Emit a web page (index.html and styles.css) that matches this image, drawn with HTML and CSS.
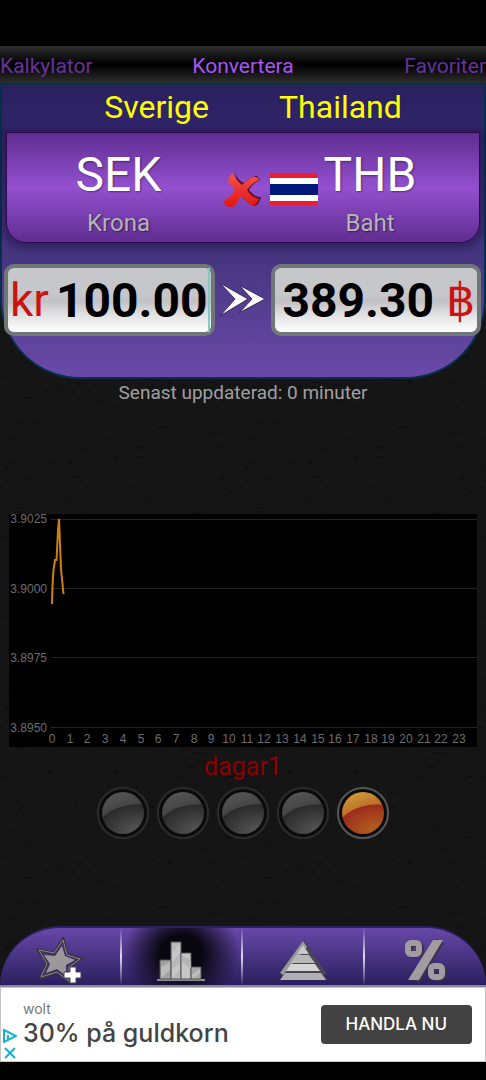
FILE: index.html
```html
<!DOCTYPE html>
<html lang="sv">
<head>
    <meta charset="UTF-8">
    <meta name="viewport" content="width=device-width, initial-scale=1.0">
    <title>Konvertera</title>
    <link rel="stylesheet" href="styles.css">
</head>
<body>
    <nav class="tabs">
        <a href="#kalkylator">Kalkylator</a>
        <a href="#konvertera" class="active">Konvertera</a>
        <a href="#favoriter">Favoriter</a>
    </nav>

    <main class="content">
        <section class="panel">
            <div class="countries">
                <span>Sverige</span>
                <span>Thailand</span>
            </div>

            <div class="currencies">
                <button class="currency" type="button">
                    <span class="code">SEK</span>
                    <span class="name">Krona</span>
                </button>
                <button class="icon-btn" type="button" aria-label="Rensa">
                    <svg width="40" height="40" viewBox="0 0 40 40">
                        <defs>
                            <linearGradient id="red" x1="0" y1="0" x2="0" y2="1">
                                <stop offset="0" stop-color="#f4544e"/>
                                <stop offset="1" stop-color="#e0140f"/>
                            </linearGradient>
                        </defs>
                        <path d="M12 2 C14 7 18 11 22 13 C26 9 31 6 35 6 L38 10 C33 12 29 16 27 20 C31 25 34 27 39 27 C38 32 35 36 32 36 C27 34 23 30 20 27 Z" fill="#5a1030"/>
                        <path d="M11 3 C8 5 6 8 6 12 C9 15 11 17 13 20 C10 25 6 29 1 31 C3 35 6 38 10 37 C14 35 17 30 19 26 C23 30 27 34 31 36 C34 34 36 32 37 29 C32 28 28 25 25 20 C28 16 32 12 37 10 C35 6 31 6 27 9 C24 11 22 13 20 15 C16 12 13 8 11 3 Z" fill="url(#red)"/>
                    </svg>
                </button>
                <button class="currency target" type="button">
                    <svg class="flag" width="48" height="32" viewBox="0 0 48 32">
                        <rect width="48" height="32" fill="#ed1c2e"/>
                        <rect y="5" width="48" height="23" fill="#fff"/>
                        <rect y="11" width="48" height="11" fill="#00187a"/>
                    </svg>
                    <span class="code">THB</span>
                    <span class="name">Baht</span>
                </button>
            </div>

            <div class="amounts">
                <label class="amount">
                    <span class="symbol">kr</span>
                    <input type="text" value="100.00" aria-label="Belopp i SEK">
                    <span class="caret"></span>
                </label>
                <svg class="arrows" width="48" height="38" viewBox="0 0 48 38">
                    <path d="M1 2 L29 18 L1 35 L16 18 Z" fill="#fff" stroke="#3a2a66"/>
                    <path d="M20 4 L46 18 L20 32 L33 18 Z" fill="#fff" stroke="#3a2a66"/>
                </svg>
                <label class="amount">
                    <input type="text" value="389.30" aria-label="Belopp i THB">
                    <span class="symbol">฿</span>
                </label>
            </div>
        </section>

        <p class="updated">Senast uppdaterad: 0 minuter</p>

        <svg class="chart" viewBox="0 0 468 233">
            <rect width="468" height="233" fill="#000"/>
            <g class="grid">
                <path d="M42 5h426M42 74h426M42 143h426M42 213h426"/>
            </g>
            <g class="y-labels">
                <text x="38" y="9">3.9025</text>
                <text x="38" y="79">3.9000</text>
                <text x="38" y="148">3.8975</text>
                <text x="38" y="218">3.8950</text>
            </g>
            <g class="x-labels" id="x-labels"></g>
            <path class="line" d="M43 90 L43.500 72 L44.500 56 L46 46 H47.500 L49 17 L50 5 L51 30 L52 55 L54.500 80"/>
        </svg>

        <p class="range">dagar1</p>

        <div class="dots">
            <input type="radio" name="range" aria-label="5 år">
            <input type="radio" name="range" aria-label="1 år">
            <input type="radio" name="range" aria-label="1 månad">
            <input type="radio" name="range" aria-label="1 vecka">
            <input type="radio" name="range" aria-label="1 dag" checked>
        </div>

        <nav class="toolbar">
            <button type="button" aria-label="Lägg till favorit">
                <svg width="48" height="48" viewBox="0 0 48 48">
                    <path d="M27 2 L31 17 L45 22 L33 30 L34 45 L21 35 L5 41 L11 27 L2 13 L18 16 Z" fill="#45316f" stroke="#3a3642" stroke-width="3"/>
                    <path d="M27 3 L31 18 L44 22 L33 30 L33 44 L21 35 L5 40 L11 27 L3 13 L18 16 Z" fill="none" stroke="#8a868c"/>
                    <path d="M26 9 L29 19 L39 23 L30 28 L30 39 L21 32 L10 36 L14 27 L8 18 L19 19 Z" fill="#9a989b"/>
                    <path d="M34 30h6v5h5v6h-5v5h-6v-5h-6v-6h6z" fill="#fff" stroke="#4a4356"/>
                </svg>
            </button>
            <button type="button" class="active" aria-label="Diagram">
                <svg width="48" height="48" viewBox="0 0 48 48">
                    <path d="M0 43h48" stroke="#8d8d8d" stroke-width="2"/>
                    <g stroke="#555">
                        <path d="M3 23h11v19H3z" fill="#a2a2a2"/>
                        <path d="M14 5h10v37H14z" fill="#b8b8b8"/>
                        <path d="M24 16h10v26H24z" fill="#c6c6c6"/>
                        <path d="M34 30h10v12H34z" fill="#a8a8a8"/>
                    </g>
                    <path d="M4 30l9-5v8l-9 8zM15 15l8-8v9l-8 9zM15 33l8-8v8l-8 8zM35 38l8-6v4l-7 6z" fill="#d4d4d4" opacity=".5"/>
                    <path d="M25 18l9 6v7l-9-6z" fill="#b4b4b4"/>
                </svg>
            </button>
            <button type="button" aria-label="Pyramid">
                <svg width="48" height="48" viewBox="0 0 48 48">
                    <path d="M25 3 L48 37 L45 38 L48 43 L2 43 L4 37 L1 36 Z" fill="#4a4456"/>
                    <path d="M24 4 L28 10 L4 38 L1 36 Z" fill="#999"/>
                    <path d="M24 8 L30 17 H18 Z" fill="#c8c8c8"/>
                    <path d="M17 18 H30 L36 26 H12 Z" fill="#b8b8b8"/>
                    <path d="M12 27 H36 L41 34 H7 Z" fill="#d4d4d4"/>
                    <path d="M6 36 H42 L47 43 H1 Z" fill="#b0b0b0"/>
                </svg>
            </button>
            <button type="button" aria-label="Procent">
                <svg width="48" height="48" viewBox="0 0 48 48">
                    <g transform="translate(2 1)" fill="none" stroke="#3c334b">
                        <rect x="7" y="6" width="11" height="11" rx="4" stroke-width="6"/>
                        <rect x="30" y="29" width="11" height="11" rx="4" stroke-width="6"/>
                        <path d="M37 3 L12 43" stroke-width="9"/>
                    </g>
                    <g fill="none" stroke="#a09ca0">
                        <rect x="7" y="6" width="11" height="11" rx="3" stroke-width="6"/>
                        <rect x="30" y="29" width="11" height="11" rx="3" stroke-width="6"/>
                    </g>
                    <path d="M32 3h10L18 43H7z" fill="#a09ca0"/>
                </svg>
            </button>
        </nav>
    </main>

    <aside class="ad">
        <div class="ad-marks">
            <svg width="14" height="14" viewBox="0 0 14 14">
                <path d="M1 1 L13 7 L1 13 Z M5 6 V10" fill="none" stroke="#14b1d4" stroke-width="2"/>
            </svg>
            <svg width="14" height="14" viewBox="0 0 14 14">
                <path d="M2 2 L12 12 M12 2 L2 12" stroke="#14b1d4" stroke-width="2"/>
            </svg>
        </div>
        <div class="ad-text">
            <p class="brand">wolt</p>
            <p class="offer">30% på guldkorn</p>
        </div>
        <a class="ad-btn" href="#handla">HANDLA NU</a>
    </aside>

    <script>
        const labels = document.getElementById('x-labels');
        for (let i = 0; i < 24; i++) {
            const text = document.createElementNS('http://www.w3.org/2000/svg', 'text');
            text.setAttribute('x', Math.round(43 + i * 17.7));
            text.setAttribute('y', 229);
            text.textContent = i;
            labels.appendChild(text);
        }
    </script>
</body>
</html>
```
FILE: styles.css
```css
* {
    margin: 0;
    padding: 0;
    box-sizing: border-box;
}

body {
    font-family: Roboto, "Liberation Sans", sans-serif;
    background: #000;
    min-height: 100vh;
    display: flex;
    flex-direction: column;
    padding: 46px 0 18px;
}

button {
    font: inherit;
    color: inherit;
    background: none;
    border: none;
    cursor: pointer;
}

.tabs {
    display: grid;
    grid-template-columns: 1fr auto 1fr;
    height: 37px;
    line-height: 40px;
    font-size: 21px;
    background: linear-gradient(#2e2e2e, #000 50%, #2e2e2e);
}

.tabs a {
    color: #663399;
    text-decoration: none;
}

.tabs a:last-child {
    text-align: right;
}

.tabs .active {
    color: #a854f5;
}

/* leather */
.content {
    flex: 1;
    display: flex;
    flex-direction: column;
    background: #121212 url("data:image/svg+xml,%3Csvg xmlns='http://www.w3.org/2000/svg' width='240' height='240'%3E%3Cfilter id='l' x='0' y='0' width='100%25' height='100%25'%3E%3CfeTurbulence type='fractalNoise' baseFrequency='.1 .2' numOctaves='3' stitchTiles='stitch'/%3E%3CfeDiffuseLighting lighting-color='%23161616' surfaceScale='1'%3E%3CfeDistantLight azimuth='235' elevation='60'/%3E%3C/feDiffuseLighting%3E%3C/filter%3E%3Crect width='240' height='240' fill='%23121212'/%3E%3Crect width='240' height='240' filter='url(%23l)' opacity='.6'/%3E%3C/svg%3E");
}

.panel {
    height: 296px;
    border: 2px solid #06304a;
    border-radius: 0 0 80px 80px;
    background: linear-gradient(#2a205e, #30256a 16%, #46347f 58%, #6a4aa8);
}

.countries {
    display: flex;
    justify-content: center;
    gap: 70px;
    padding-left: 20px;
    height: 47px;
    line-height: 44px;
    font-size: 32px;
    color: #ffff00;
}

.currencies {
    display: flex;
    align-items: center;
    height: 111px;
    margin: 0 4px;
    border: 1px solid #2a0a4a;
    border-radius: 0 0 20px 20px;
    background: linear-gradient(#5f2d91, #9450d0 50%, #5f2d91);
    box-shadow: 0 2px 6px 4px rgba(20, 10, 50, 0.35);
}

.currency {
    flex: 1;
    display: grid;
    justify-items: center;
    padding: 14px 0 0 8px;
}

.currency.target {
    flex: none;
    grid-template-columns: 48px 104px;
    align-items: center;
    padding: 14px 57px 0 8px;
}

.flag {
    grid-row: 1 / 3;
    margin-bottom: 12px;
}

.code {
    font-size: 48px;
    line-height: 56px;
    color: #fff;
    text-shadow: 1px 1px 2px rgba(0, 0, 0, 0.4);
}

.currency.target .name {
    grid-column: 2;
}

.name {
    font-size: 24px;
    line-height: 40px;
    color: #b4b4b4;
    text-shadow: 1px 1px 2px rgba(0, 0, 0, 0.5);
}

.icon-btn {
    height: 40px;
    margin-top: 4px;
}

.amounts {
    display: flex;
    align-items: center;
    justify-content: space-between;
    margin: 21px 3px 0 2px;
}

.amount {
    flex: 1;
    display: flex;
    align-items: center;
    height: 72px;
    min-width: 0;
    padding: 0 2px;
    border: 4px solid #6f7779;
    border-radius: 10px;
    background: linear-gradient(#c6c7cb 40%, #c2c2c6 52%, #e0e0e2 72%, #fff);
    font-size: 46px;
}

.amount input {
    flex: 1;
    min-width: 0;
    width: 100%;
    border: none;
    outline: none;
    background: none;
    font: bold 48px Roboto, "Liberation Sans", sans-serif;
    color: #000;
    text-align: right;
}

.symbol {
    color: #cc1212;
}

.amount input + .symbol {
    margin-left: 12px;
}

.caret {
    align-self: stretch;
    width: 2px;
    margin-right: -1px;
    background: #80cbc4;
}

.arrows {
    margin: 0 4px;
}

.updated {
    margin-top: 2px;
    font-size: 19px;
    line-height: 24px;
    text-align: center;
    color: #a0a0a0;
}

.chart {
    display: block;
    overflow: visible;
    margin: auto 9px 0;
    font-family: "Liberation Sans", Arial, sans-serif;
    font-size: 12px;
}

.grid {
    stroke: #242424;
}

.grid path {
    shape-rendering: crispEdges;
}

.y-labels {
    fill: #6e6e6e;
    text-anchor: end;
}

.x-labels {
    fill: #6e6e6e;
    text-anchor: middle;
}

.line {
    fill: none;
    stroke: #d08010;
    stroke-width: 2;
}

.range {
    margin-top: 4px;
    font-size: 25px;
    line-height: 32px;
    text-align: center;
    color: #8b0000;
}

.dots {
    display: flex;
    justify-content: center;
    gap: 8px;
    margin: 4px 0 87px;
}

.dots input {
    appearance: none;
    width: 52px;
    height: 52px;
    padding: 3px;
    border: 2px solid #2b2b2b;
    border-radius: 50%;
    background: #0a0a0a;
    box-shadow: 0 0 2px #222;
}

.dots input::before {
    content: "";
    display: block;
    width: 42px;
    height: 42px;
    border-radius: 50%;
    background:
        radial-gradient(ellipse 42px 28px at 36px 40px, #585858, #2a2a2a 97%, transparent),
        linear-gradient(160deg, #5a5a5a, #3a3a3a 60%);
}

.dots input:checked {
    border-color: #565656;
}

.dots input:checked::before {
    background:
        radial-gradient(ellipse 42px 28px at 36px 40px, #b5651c, #9c2c1c 97%, transparent),
        linear-gradient(160deg, #d0a840, #b8561e 60%);
}

.toolbar {
    display: grid;
    grid-template-columns: repeat(4, 1fr);
    height: 61px;
    overflow: hidden;
    border-top: 2px solid #2b2060;
    border-bottom: 2px solid #8a849c;
    border-radius: 60px 60px 0 0;
    background: linear-gradient(#6848a8, #2a1f5e);
}

.toolbar button {
    display: flex;
    align-items: center;
    justify-content: center;
    padding-top: 8px;
    border-right: 2px solid;
    border-image: linear-gradient(transparent, #e0dcf0 50%, transparent) 1;
}

.toolbar button:last-child {
    border: none;
}

.toolbar .active {
    background: radial-gradient(ellipse 58px 54px at 50% 45%, #08060f 35%, transparent);
}

.ad {
    display: flex;
    align-items: center;
    height: 75px;
    padding-right: 13px;
    border: 1px solid #c4c4c4;
    background: #fff;
}

.ad-marks {
    display: flex;
    flex-direction: column;
    align-self: flex-end;
    gap: 3px;
    padding: 0 0 1px 2px;
}

.ad-text {
    flex: 1;
    padding-left: 6px;
    font-family: Inter, Lato, sans-serif;
}

.brand {
    font-size: 14px;
    line-height: 16px;
    color: #777;
}

.offer {
    font-size: 25px;
    font-weight: 500;
    line-height: 32px;
    color: #444;
}

.ad-btn {
    padding: 0 25px;
    border-radius: 4px;
    background: #424242;
    color: #fff;
    font: 500 17px Inter, Lato, sans-serif;
    line-height: 39px;
    text-decoration: none;
}
```
